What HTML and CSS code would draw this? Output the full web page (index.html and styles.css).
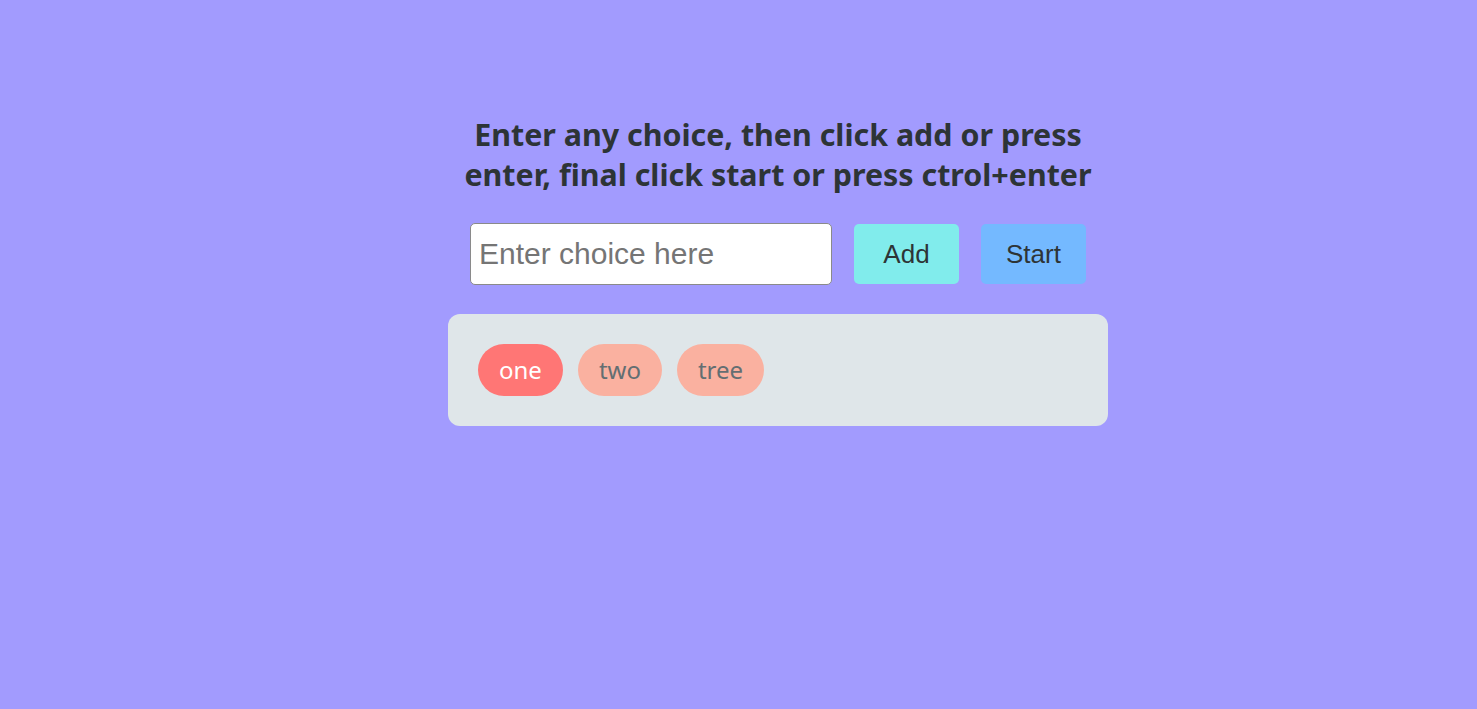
FILE: index.html
```html
<!DOCTYPE html>
<html>
<head>
<meta charset="utf-8">
<link rel="stylesheet" href="styles.css">
</head>
<body>
<main class="app">
  <h1 class="title">Enter any choice, then click add or press enter, final click start or press ctrol+enter</h1>
  <div class="controls">
    <input class="choice-input" type="text" placeholder="Enter choice here">
    <button class="btn btn-add">Add</button>
    <button class="btn btn-start">Start</button>
  </div>
  <div class="choices">
    <span class="pill pill-active">one</span>
    <span class="pill">two</span>
    <span class="pill">tree</span>
  </div>
</main>
</body>
</html>
```
FILE: styles.css
```css
html, body {
  margin: 0;
  padding: 0;
}
body {
  background: #a29bfe;
  min-height: 709px;
  padding-left: 79px;
  font-family: "Noto Sans", "Open Sans", sans-serif;
}
.app {
  width: 660px;
  margin: 0 auto;
  padding-top: 115px;
  display: flex;
  flex-direction: column;
  align-items: center;
}
.title {
  margin: 0;
  width: 650px;
  text-align: center;
  font-size: 30.4px;
  line-height: 40px;
  font-weight: 700;
  color: #2d3436;
}
.controls {
  margin-top: 28px;
  display: flex;
  gap: 22px;
  align-items: center;
}
.choice-input {
  box-sizing: border-box;
  width: 362px;
  height: 62px;
  border: 1px solid #8a8a8a;
  border-radius: 5px;
  padding: 0 8px;
  font-family: "Liberation Sans", Arial, sans-serif;
  font-size: 30px;
  color: #333;
  background: #fff;
  outline: none;
}
.choice-input::placeholder {
  color: #757575;
}
.btn {
  box-sizing: border-box;
  width: 105px;
  height: 60px;
  border: none;
  border-radius: 5px;
  font-family: "Liberation Sans", Arial, sans-serif;
  font-size: 26px;
  color: #2d3436;
  cursor: pointer;
}
.btn-add {
  background: #81ecec;
}
.btn-start {
  background: #74b9ff;
}
.choices {
  box-sizing: border-box;
  margin-top: 29px;
  width: 660px;
  height: 112px;
  background: #dfe6e9;
  border-radius: 12px;
  padding: 30px;
  display: flex;
  gap: 15px;
  align-items: flex-start;
}
.pill {
  height: 52px;
  line-height: 52px;
  padding: 0 21px;
  border-radius: 26px;
  background: #fab1a0;
  color: #636e72;
  font-size: 24px;
}
.pill-active {
  background: #ff7675;
  color: #fff;
}
```
